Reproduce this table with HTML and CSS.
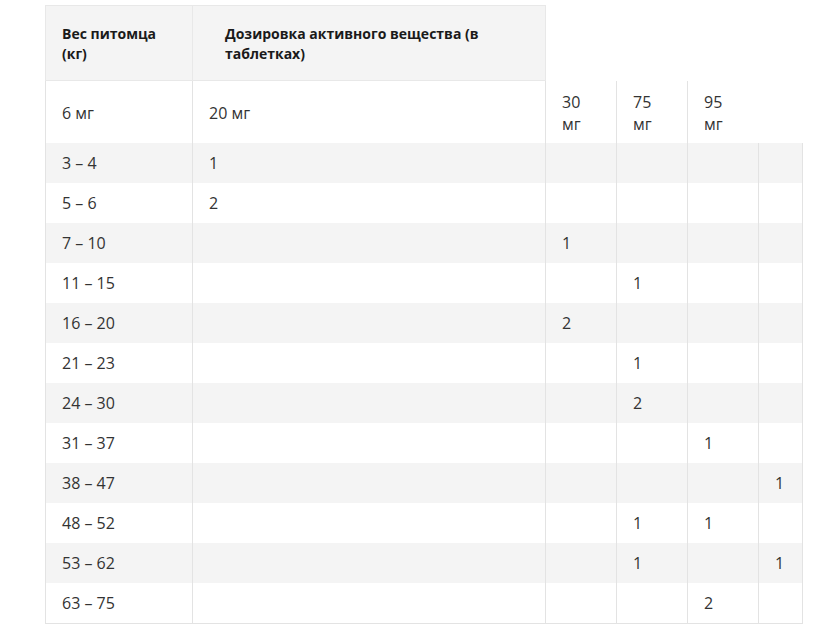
FILE: index.html
```html
<!DOCTYPE html>
<html lang="ru">
<head>
<meta charset="utf-8">
<title>Дозировка</title>
<link rel="stylesheet" href="styles.css">
</head>
<body>
<div class="wrap">
<table class="dose">
<colgroup>
<col class="c1"><col class="c2"><col class="c3"><col class="c4"><col class="c5"><col class="c6">
</colgroup>
<tr><th>Вес питомца (кг)</th><th class="th-dose"><span class="th-text">Дозировка активного вещества (в таблетках)</span></th></tr>
<tr class="sub"><td>6 мг</td><td>20 мг</td><td>30 мг</td><td>75 мг</td><td>95 мг</td></tr>
<tr><td>3 – 4</td><td>1</td><td></td><td></td><td></td><td></td></tr>
<tr><td>5 – 6</td><td>2</td><td></td><td></td><td></td><td></td></tr>
<tr><td>7 – 10</td><td></td><td>1</td><td></td><td></td><td></td></tr>
<tr><td>11 – 15</td><td></td><td></td><td>1</td><td></td><td></td></tr>
<tr><td>16 – 20</td><td></td><td>2</td><td></td><td></td><td></td></tr>
<tr><td>21 – 23</td><td></td><td></td><td>1</td><td></td><td></td></tr>
<tr><td>24 – 30</td><td></td><td></td><td>2</td><td></td><td></td></tr>
<tr><td>31 – 37</td><td></td><td></td><td></td><td>1</td><td></td></tr>
<tr><td>38 – 47</td><td></td><td></td><td></td><td></td><td>1</td></tr>
<tr><td>48 – 52</td><td></td><td></td><td>1</td><td>1</td><td></td></tr>
<tr><td>53 – 62</td><td></td><td></td><td>1</td><td></td><td>1</td></tr>
<tr class="last"><td>63 – 75</td><td></td><td></td><td></td><td>2</td><td></td></tr>
</table>
</div>
</body>
</html>
```
FILE: styles.css
```css
html, body {
  margin: 0;
  padding: 0;
  background: #fff;
}
.wrap {
  padding: 5px 0 0 45px;
}
.dose {
  border-collapse: collapse;
  table-layout: fixed;
  width: 757px;
  font-family: "Open Sans", "Noto Sans", sans-serif;
  font-size: 16px;
  line-height: 22px;
  color: #333;
}
.c1 { width: 147px; }
.c2 { width: 353px; }
.c3 { width: 71px; }
.c4 { width: 71px; }
.c5 { width: 71px; }
.c6 { width: 44px; }
.dose tr:nth-child(odd) {
  background: #f4f4f4;
}
.dose td,
.dose th {
  padding: 9px 16px 9px 16px;
  text-align: left;
  vertical-align: middle;
  font-weight: normal;
}
.dose td {
  border-left: 1px solid #e3e3e3;
}
.dose td:nth-child(6) {
  border-right: 1px solid #e3e3e3;
}
.dose tr.last td {
  border-bottom: 1px solid #e3e3e3;
}
.dose th {
  border: 1px solid #e8e8e8;
  font-size: 14px;
  line-height: 20px;
  font-weight: 700;
  color: #1a1a1a;
  padding: 18px 16px 16px 16px;
}
.dose th.th-dose {
  padding-left: 32px;
}
.th-text {
  display: block;
  max-width: 270px;
}
.dose .sub td {
  padding-top: 10px;
  padding-bottom: 8px;
}
```
